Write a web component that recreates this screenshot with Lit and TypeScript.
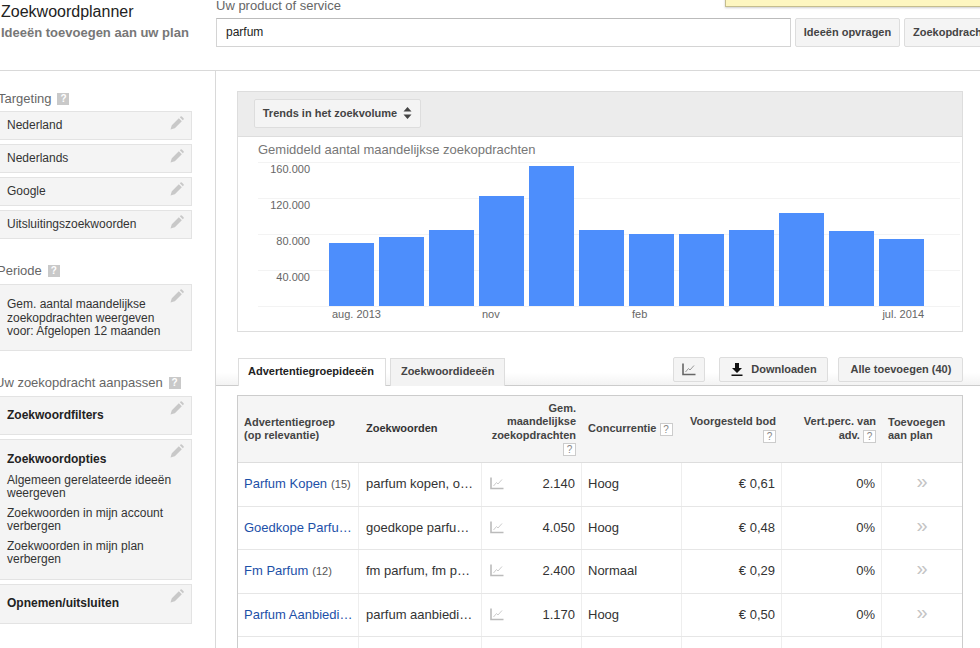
import { LitElement, css, html, svg } from 'lit';
import { customElement } from 'lit/decorators.js';

const bars = [63, 69, 76, 110, 140, 76, 72, 72, 76, 93, 75, 67];
const xLabels = ['aug. 2013', '', '', 'nov', '', '', 'feb', '', '', '', '', 'jul. 2014'];
const yLabels = ['160.000', '120.000', '80.000', '40.000'];

const rows = [
  { name: 'Parfum Kopen', count: '(15)', words: 'parfum kopen, o…', volume: '2.140', comp: 'Hoog', bid: '€ 0,61' },
  { name: 'Goedkope Parfu…', count: '', words: 'goedkope parfu…', volume: '4.050', comp: 'Hoog', bid: '€ 0,48' },
  { name: 'Fm Parfum', count: '(12)', words: 'fm parfum, fm p…', volume: '2.400', comp: 'Normaal', bid: '€ 0,29' },
  { name: 'Parfum Aanbiedi…', count: '', words: 'parfum aanbiedi…', volume: '1.170', comp: 'Hoog', bid: '€ 0,50' },
];

const pencil = svg`<svg class="pencil" width="14" height="14" viewBox="0 0 14 14"><path fill="#c8c8c8" d="M0.5 13.5 L1.8 9.2 L8.8 2.2 L11.8 5.2 L4.8 12.2 Z M9.8 1.2 L10.6 0.4 Q11.2 0 11.8 0.4 L13.6 2.2 Q14 2.8 13.6 3.4 L12.8 4.2 Z"/></svg>`;

const trend = (axis: string, line: string) => svg`<svg width="14" height="13" viewBox="0 0 14 13" fill="none">
  <path d="M1 0.5 V11.5 H13.5" stroke=${axis} stroke-width="1.6"/>
  <path d="M3.5 9 L6.5 5.5 L8 7 L12 2.5" stroke=${line} stroke-width="1"/>
</svg>`;

@customElement('app-root')
export class AppRoot extends LitElement {
  static styles = css`
    :host {
      display: block;
      position: relative;
      width: 980px;
      height: 648px;
      overflow: hidden;
      background: #fff;
      font-family: 'Liberation Sans', Arial, sans-serif;
      color: #333;
    }
    .notice {
      position: absolute;
      left: 725px;
      top: -10px;
      width: 300px;
      height: 15px;
      background: #fdf6c0;
      border: 1px solid #c4bd8e;
      box-shadow: 0 1px 2px rgba(0, 0, 0, 0.2);
    }
    .top {
      display: flex;
      height: 70px;
      border-bottom: 1px solid #d9d9d9;
      box-sizing: content-box;
    }
    .brand {
      flex: none;
      width: 215px;
      padding-left: 1px;
      box-sizing: border-box;
      white-space: nowrap;
    }
    .brand h1 {
      margin: 3px 0 0;
      font-size: 16px;
      line-height: 18px;
      font-weight: normal;
      color: #222;
    }
    .brand h2 {
      margin: 3px 0 0;
      font-size: 13px;
      line-height: 18px;
      font-weight: bold;
      color: #777;
    }
    .search {
      margin-left: 1px;
    }
    .search label {
      display: block;
      margin-top: -2px;
      font-size: 13px;
      line-height: 15px;
      color: #666;
      margin-bottom: 5px;
    }
    .search-row {
      display: flex;
      gap: 4px;
      white-space: nowrap;
    }
    .input {
      flex: none;
      width: 575px;
      height: 29px;
      box-sizing: border-box;
      border: 1px solid #d4d4d4;
      border-top-color: #bbb;
      padding-left: 9px;
      font-size: 12px;
      line-height: 26px;
      color: #222;
    }
    .btn {
      display: flex;
      align-items: center;
      justify-content: center;
      box-sizing: border-box;
      flex: none;
      padding-bottom: 1px;
      background: #f4f4f4;
      border: 1px solid #ddd;
      border-radius: 2px;
      font-size: 11px;
      font-weight: bold;
      color: #444;
      white-space: nowrap;
    }
    .search-row .btn {
      height: 29px;
      width: 105px;
    }
    .search-row .btn.cut {
      width: 120px;
      justify-content: flex-start;
      padding-left: 8px;
    }
    .body {
      display: flex;
    }
    .side {
      width: 218px;
      margin-left: -2px;
      padding: 19px 23px 0 0;
      box-sizing: border-box;
      border-right: 1px solid #d9d9d9;
      height: 578px;
      flex: none;
    }
    .side-label {
      display: flex;
      align-items: center;
      gap: 6px;
      height: 17px;
      margin-bottom: 5px;
      font-size: 13px;
      color: #666;
    }
    .side-label.first {
      margin-bottom: 4px;
    }
    .side-label.nudge {
      margin-left: -1px;
    }
    .side-label.long {
      margin-left: -3px;
    }
    .help {
      display: inline-block;
      width: 12px;
      height: 12px;
      background: #c9c9c9;
      color: #fff;
      font-size: 10px;
      font-weight: bold;
      line-height: 12px;
      text-align: center;
    }
    .cards {
      display: flex;
      flex-direction: column;
      gap: 4px;
      margin-bottom: 23px;
    }
    .card {
      position: relative;
      box-sizing: border-box;
      background: #f4f4f4;
      border: 1px solid #e3e3e3;
      padding: 0 24px 0 8px;
      font-size: 12px;
      line-height: 13.5px;
      color: #333;
    }
    .card.one {
      height: 29px;
      line-height: 26px;
    }
    .card.tall {
      height: 67px;
      padding-top: 13px;
    }
    .card.bold {
      height: 40px;
      padding-top: 12px;
    }
    .card.bold.short {
      height: 39px;
    }
    .card.options {
      height: 141px;
      padding-top: 13px;
      padding-right: 10px;
    }
    .card b {
      color: #222;
    }
    .card p {
      margin: 6px 0 0;
    }
    .card.options b {
      display: block;
      margin-bottom: 7px;
    }
    .pencil {
      position: absolute;
      right: 7px;
      top: 4px;
    }
    .main {
      flex: 1;
      min-width: 0;
      padding-top: 20px;
    }
    .chart {
      width: 726px;
      height: 241px;
      margin-left: 21px;
      box-sizing: border-box;
      border: 1px solid #ddd;
    }
    .chart-head {
      height: 45px;
      box-sizing: border-box;
      padding: 7px 16px 0;
      background: #ececec;
      border-bottom: 1px solid #ddd;
    }
    .select {
      width: 167px;
      height: 29px;
      gap: 6px;
    }
    .chart-title {
      margin: 5px 0 0 20px;
      font-size: 13px;
      line-height: 16px;
      color: #777;
      height: 20px;
      white-space: nowrap;
    }
    .plot {
      display: flex;
      height: 145px;
      margin-left: 20px;
      width: 702px;
      background: repeating-linear-gradient(to bottom, #f3f3f3 0 1px, transparent 1px 36px);
    }
    .y-axis {
      width: 52px;
      flex: none;
      text-align: right;
      font-size: 11px;
      color: #666;
    }
    .y-axis div {
      height: 36px;
      line-height: 14px;
    }
    .bars {
      display: flex;
      align-items: flex-end;
      gap: 5px;
      height: 144px;
      margin-left: 19px;
    }
    .bar {
      width: 45px;
      background: #4d8efc;
    }
    .x-axis {
      display: flex;
      gap: 5px;
      margin: 0 0 0 91px;
      font-size: 11px;
      line-height: 14px;
      color: #666;
    }
    .x-axis div {
      width: 45px;
      flex: none;
      box-sizing: border-box;
      padding-left: 3px;
      white-space: nowrap;
    }
    .x-axis div:last-child {
      padding: 0;
      text-align: right;
    }
    .tabbar {
      display: flex;
      align-items: flex-start;
      margin-top: 25px;
      height: 28px;
      padding-left: 22px;
      border-bottom: 1px solid #ccc;
      background: linear-gradient(to bottom, #fff 55%, #f3f3f3);
    }
    .tab {
      box-sizing: border-box;
      height: 28px;
      margin-top: 1px;
      padding: 0 10px;
      border: 1px solid #ddd;
      border-bottom: 0;
      background: #f3f3f3;
      font-size: 11px;
      font-weight: bold;
      line-height: 25px;
      color: #444;
      margin-right: 4px;
    }
    .tab.active {
      height: 28px;
      padding: 0 11px 0 9px;
      background: #fff;
      color: #222;
    }
    .tools {
      display: flex;
      margin-left: 164px;
    }
    .tools .btn {
      height: 25px;
    }
    .tools .chart-btn {
      width: 32px;
      margin-right: 14px;
    }
    .tools .dl {
      width: 109px;
      gap: 8px;
      margin-right: 10px;
    }
    .tools .add {
      width: 125px;
    }
    .table {
      width: 726px;
      margin: 9px 0 0 21px;
      box-sizing: border-box;
      border: 1px solid #ccc;
      border-bottom: 0;
    }
    .row {
      display: grid;
      grid-template-columns: 121px 123px 100px 100px 100px 100px 80px;
      height: 43.5px;
      box-sizing: border-box;
      border-bottom: 1px solid #e6e6e6;
      font-size: 13px;
    }
    .row > div {
      display: flex;
      align-items: center;
      padding: 0 6px 1px;
      min-width: 0;
      border-right: 1px solid #eee;
      white-space: nowrap;
    }
    .row > div:last-child {
      border-right: 0;
    }
    .row.head {
      height: 67px;
      background: #f5f5f5;
      border-bottom: 1px solid #ddd;
      font-size: 11px;
      font-weight: bold;
      line-height: 13.5px;
      color: #444;
    }
    .row.head > div {
      border-right: 0;
      padding-bottom: 0;
      white-space: normal;
    }
    .row.head .num {
      justify-content: flex-end;
      text-align: right;
    }
    .q {
      display: inline-block;
      width: 11px;
      height: 11px;
      box-sizing: content-box;
      border: 1px solid #ccc;
      background: #fff;
      color: #888;
      font-size: 10px;
      font-weight: normal;
      line-height: 11px;
      text-align: center;
      vertical-align: middle;
    }
    .name a {
      color: #1c50a8;
      font-size: 13px;
      text-decoration: none;
    }
    .name span {
      margin-left: 4px;
      font-size: 11px;
      color: #555;
    }
    .row > .words {
      padding-left: 7px;
      color: #333;
    }
    .row > .volume {
      justify-content: space-between;
      padding: 0 6px 1px 8px;
    }
    .row > .right {
      justify-content: flex-end;
    }
    .row > .add-cell {
      justify-content: center;
      padding: 0 0 5px;
      font-size: 20px;
      color: #c4c4c4;
    }
    .row.blank > div {
      height: 100%;
    }
  `;

  render() {
    return html`
      <div class="notice"></div>
      <header class="top">
        <div class="brand">
          <h1>Zoekwoordplanner</h1>
          <h2>Ideeën toevoegen aan uw plan</h2>
        </div>
        <div class="search">
          <label>Uw product of service</label>
          <div class="search-row">
            <div class="input">parfum</div>
            <div class="btn">Ideeën opvragen</div>
            <div class="btn cut">Zoekopdrachten</div>
          </div>
        </div>
      </header>
      <div class="body">
        <aside class="side">
          <div class="side-label first">Targeting <span class="help">?</span></div>
          <div class="cards">
            ${['Nederland', 'Nederlands', 'Google', 'Uitsluitingszoekwoorden'].map(
              (t) => html`<div class="card one">${t}${pencil}</div>`,
            )}
          </div>
          <div class="side-label nudge">Periode <span class="help">?</span></div>
          <div class="cards">
            <div class="card tall">Gem. aantal maandelijkse zoekopdrachten weergeven voor: Afgelopen 12 maanden${pencil}</div>
          </div>
          <div class="side-label long">Uw zoekopdracht aanpassen <span class="help">?</span></div>
          <div class="cards">
            <div class="card bold short"><b>Zoekwoordfilters</b>${pencil}</div>
            <div class="card options">
              <b>Zoekwoordopties</b>
              Algemeen gerelateerde ideeën weergeven
              <p>Zoekwoorden in mijn account verbergen</p>
              <p>Zoekwoorden in mijn plan verbergen</p>
              ${pencil}
            </div>
            <div class="card bold"><b>Opnemen/uitsluiten</b>${pencil}</div>
          </div>
        </aside>
        <main class="main">
          <section class="chart">
            <div class="chart-head">
              <div class="btn select">
                Trends in het zoekvolume
                <svg width="9" height="12" viewBox="0 0 9 12"><path fill="#444" d="M4.5 0 L8.5 4.5 H0.5 Z M4.5 12 L0.5 7.5 H8.5 Z"/></svg>
              </div>
            </div>
            <div class="chart-title">Gemiddeld aantal maandelijkse zoekopdrachten</div>
            <div class="plot">
              <div class="y-axis">${yLabels.map((l) => html`<div>${l}</div>`)}</div>
              <div class="bars">
                ${bars.map((h) => html`<div class="bar" style="height:${h}px"></div>`)}
              </div>
            </div>
            <div class="x-axis">${xLabels.map((l) => html`<div>${l}</div>`)}</div>
          </section>
          <div class="tabbar">
            <div class="tab active">Advertentiegroepideeën</div>
            <div class="tab">Zoekwoordideeën</div>
            <div class="tools">
              <div class="btn chart-btn">${trend('#666', '#999')}</div>
              <div class="btn dl">
                <svg width="12" height="13" viewBox="0 0 12 13"><path fill="#111" d="M4 0 H8 V5 H11 L6 10 L1 5 H4 Z M0.5 11.5 H11.5 V13 H0.5 Z"/></svg>
                Downloaden
              </div>
              <div class="btn add">Alle toevoegen (40)</div>
            </div>
          </div>
          <section class="table">
            <div class="row head">
              <div>Advertentiegroep (op relevantie)</div>
              <div class="words">Zoekwoorden</div>
              <div class="num"><span>Gem. maandelijkse zoekopdrachten <span class="q">?</span></span></div>
              <div><span>Concurrentie <span class="q">?</span></span></div>
              <div class="num"><span>Voorgesteld bod <span class="q">?</span></span></div>
              <div class="num"><span>Vert.perc. van adv. <span class="q">?</span></span></div>
              <div>Toevoegen aan plan</div>
            </div>
            ${rows.map(
              (r) => html`
                <div class="row">
                  <div class="name"><a>${r.name}</a>${r.count ? html`<span>${r.count}</span>` : ''}</div>
                  <div class="words">${r.words}</div>
                  <div class="volume">${trend('#bbb', '#ccc')}<span>${r.volume}</span></div>
                  <div>${r.comp}</div>
                  <div class="right">${r.bid}</div>
                  <div class="right">0%</div>
                  <div class="add-cell">»</div>
                </div>
              `,
            )}
            <div class="row blank"><div></div><div></div><div></div><div></div><div></div><div></div><div></div></div>
          </section>
        </main>
      </div>
    `;
  }
}
